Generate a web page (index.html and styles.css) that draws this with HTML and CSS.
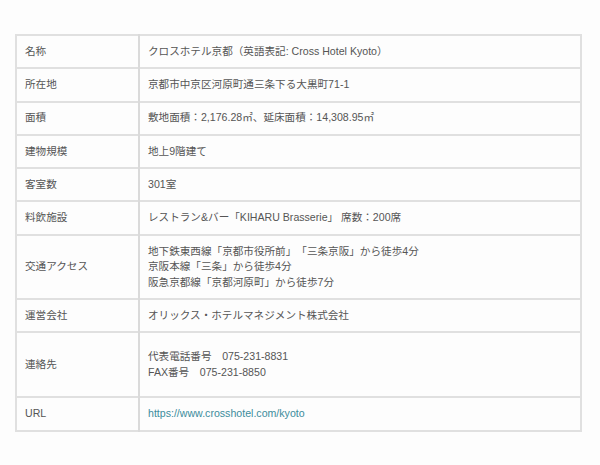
FILE: index.html
```html
<!DOCTYPE html>
<html lang="ja">
<head>
<meta charset="utf-8">
<link rel="stylesheet" href="styles.css">
</head>
<body>
<table class="info">
<tbody>
<tr><th>名称</th><td>クロスホテル京都（英語表記: Cross Hotel Kyoto）</td></tr>
<tr><th>所在地</th><td>京都市中京区河原町通三条下る大黒町71-1</td></tr>
<tr><th>面積</th><td>敷地面積：2,176.28㎡、延床面積：14,308.95㎡</td></tr>
<tr><th>建物規模</th><td>地上9階建て</td></tr>
<tr><th>客室数</th><td>301室</td></tr>
<tr><th>料飲施設</th><td>レストラン&amp;バー「KIHARU Brasserie」 席数：200席</td></tr>
<tr><th>交通アクセス</th><td>地下鉄東西線「京都市役所前」「三条京阪」から徒歩4分<br>京阪本線「三条」から徒歩4分<br>阪急京都線「京都河原町」から徒歩7分</td></tr>
<tr><th>運営会社</th><td>オリックス・ホテルマネジメント株式会社</td></tr>
<tr class="tall"><th>連絡先</th><td>代表電話番号　075-231-8831<br>FAX番号　075-231-8850</td></tr>
<tr><th>URL</th><td><a class="link" href="#">https://www.crosshotel.com/kyoto</a></td></tr>
</tbody>
</table>
</body>
</html>
```
FILE: styles.css
```css
html, body {
  margin: 0;
  padding: 0;
  background: #fdfdfd;
}
body {
  padding: 34px 0 0 15px;
  font-family: "Liberation Sans", "Noto Sans CJK JP", sans-serif;
  font-size: 10.6px;
  line-height: 15.5px;
  color: #555;
  text-spacing-trim: space-all;
}
.info {
  width: 567px;
  border-collapse: collapse;
  border: 2px solid #e0e0e0;
}
.info th,
.info td {
  text-align: left;
  font-weight: normal;
  vertical-align: middle;
  padding: 7.9px 9px;
  border-top: 2px solid #e0e0e0;
}
.info th {
  width: 104px;
  padding-left: 8px;
  border-right: 2px solid #dadada;
}
.info td {
  padding-left: 8px;
}
.info tr.tall td,
.info tr.tall th {
  padding-top: 16px;
  padding-bottom: 16px;
}
.link {
  color: #3c8c9c;
  text-decoration: none;
}
```
